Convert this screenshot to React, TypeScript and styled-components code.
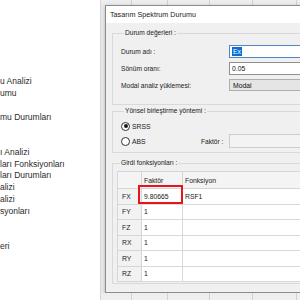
import React from 'react';
import styled, { createGlobalStyle } from 'styled-components';

const GlobalStyle = createGlobalStyle`
  html, body {
    margin: 0;
    padding: 0;
    background: #ffffff;
  }
  * {
    box-sizing: border-box;
  }
`;

const treeItems = [
  '', '', '', '', '', '', '',
  'u Analizi',
  'umu',
  '',
  'mu Durumları',
  '', '',
  'ı Analizi',
  'ları Fonksiyonları',
  'ları Durumları',
  'alizi',
  'alizi',
  'syonları',
  '', '',
  'eri',
  '', '', '',
];

const stripCells = [31, 36, 42, 43, 44, 20];

const rows = [
  { name: 'FX', factor: '9.80665', fn: 'RSF1' },
  { name: 'FY', factor: '1', fn: '' },
  { name: 'FZ', factor: '1', fn: '' },
  { name: 'RX', factor: '1', fn: '' },
  { name: 'RY', factor: '1', fn: '' },
  { name: 'RZ', factor: '1', fn: '' },
];

function App() {
  return (
    <>
      <GlobalStyle />
      <Screen>
        <Sidebar>
          <TreeList>
            {treeItems.map((t, i) => (
              <TreeItem key={i}>{t}</TreeItem>
            ))}
          </TreeList>
        </Sidebar>
        <Workspace>
          <Strip $height={5}>
            {stripCells.map((w, i) => (
              <StripCell key={i} style={{ width: w }} />
            ))}
          </Strip>
          <Dialog>
            <TitleBar>Tasarım Spektrum Durumu</TitleBar>
            <DialogBody>
              <GroupBox $pad="7px 0 12px 8px">
                <GroupTitle>Durum değerleri :</GroupTitle>
                <FormGrid>
                  <FieldLabel>Durum adı :</FieldLabel>
                  <TextBox $focused>
                    <Selected>Ex</Selected>
                  </TextBox>
                  <FieldLabel>Sönüm oranı:</FieldLabel>
                  <TextBox>0.05</TextBox>
                  <FieldLabel>Modal analiz yüklemesi:</FieldLabel>
                  <ComboBox>Modal</ComboBox>
                </FormGrid>
              </GroupBox>

              <GroupBox $pad="4px 0 4px 8px" $gap={1}>
                <GroupTitle>Yönsel birleştirme yöntemi :</GroupTitle>
                <MethodGrid>
                  <RadioRow>
                    <Radio $checked />
                    <span>SRSS</span>
                  </RadioRow>
                  <span />
                  <span />
                  <RadioRow>
                    <Radio />
                    <span>ABS</span>
                  </RadioRow>
                  <FieldLabel>Faktör :</FieldLabel>
                  <TextBox $disabled $tall />
                </MethodGrid>
              </GroupBox>

              <GroupBox $pad="3px 0 1px 4px" $gap={5}>
                <GroupTitle>Girdi fonksiyonları :</GroupTitle>
                <TableWrap>
                  <Grid>
                    <colgroup>
                      <col style={{ width: 24 }} />
                      <col style={{ width: 41 }} />
                      <col />
                    </colgroup>
                    <thead>
                      <tr>
                        <CornerCell />
                        <HeadCell>Faktör</HeadCell>
                        <HeadCell>Fonksiyon</HeadCell>
                      </tr>
                    </thead>
                    <tbody>
                      {rows.map((r) => (
                        <tr key={r.name}>
                          <RowHead>{r.name}</RowHead>
                          <Cell>{r.factor}</Cell>
                          <Cell>{r.fn}</Cell>
                        </tr>
                      ))}
                    </tbody>
                  </Grid>
                  <Highlight />
                </TableWrap>
              </GroupBox>
            </DialogBody>
          </Dialog>
          <Strip $height={7}>
            {stripCells.map((w, i) => (
              <StripCell key={i} style={{ width: w }} />
            ))}
          </Strip>
        </Workspace>
      </Screen>
    </>
  );
}

export default App;

const Screen = styled.div`
  display: flex;
  width: 300px;
  height: 300px;
  overflow: hidden;
  font-family: 'Liberation Sans', Arial, sans-serif;
  color: #111;
`;

const Sidebar = styled.div`
  width: 101px;
  flex-shrink: 0;
  background: #ffffff;
  border-right: 1px solid #d6d6d6;
  overflow: hidden;
`;

const TreeList = styled.div`
  margin-top: -6px;
  display: flex;
  flex-direction: column;
`;

const TreeItem = styled.div`
  height: 11.75px;
  line-height: 11.75px;
  font-size: 8.5px;
  color: #2a2a2a;
  white-space: nowrap;
`;

const Workspace = styled.div`
  flex: 1;
  display: flex;
  flex-direction: column;
  background: #ececec;
  min-width: 0;
`;

const Strip = styled.div<{ $height: number }>`
  display: flex;
  height: ${({ $height }) => $height}px;
  flex-shrink: 0;
  background: #eeeeee;
`;

const StripCell = styled.div`
  flex-shrink: 0;
  height: 100%;
  border-right: 1px solid #d2d2d2;
`;

const Dialog = styled.div`
  width: 280px;
  min-width: 280px;
  height: 288px;
  margin-left: 4px;
  flex-shrink: 0;
  display: flex;
  flex-direction: column;
  border: 1px solid #8c8c8c;
  background: #f0f0f0;
  box-shadow: 0 1px 4px rgba(0, 0, 0, 0.25);
`;

const TitleBar = styled.div`
  height: 17px;
  flex-shrink: 0;
  background: #ffffff;
  padding-left: 4px;
  font-size: 7.2px;
  line-height: 17px;
  color: #1a1a1a;
`;

const DialogBody = styled.div`
  flex: 1;
  display: flex;
  flex-direction: column;
  padding: 5px 0 0 6px;
`;

const GroupBox = styled.fieldset<{ $pad: string; $gap?: number }>`
  margin: ${({ $gap }) => $gap ?? 0}px 0 0 0;
  padding: ${({ $pad }) => $pad};
  border: 1px solid #d9d9d9;
  min-width: 0;
`;

const GroupTitle = styled.legend`
  padding: 0 1px;
  margin-left: 3px;
  font-size: 6.6px;
  line-height: 10px;
  color: #1a1a1a;
`;

const FormGrid = styled.div`
  display: grid;
  grid-template-columns: 108px 1fr;
  grid-auto-rows: 13px;
  row-gap: 4px;
  align-items: center;
`;

const FieldLabel = styled.span`
  font-size: 6.6px;
  color: #1a1a1a;
  white-space: nowrap;
`;

const TextBox = styled.div<{ $focused?: boolean; $disabled?: boolean; $tall?: boolean }>`
  height: ${({ $tall }) => ($tall ? 14 : 13)}px;
  display: flex;
  align-items: center;
  padding-left: 2px;
  font-size: 6.8px;
  background: ${({ $disabled }) => ($disabled ? '#f3f3f3' : '#ffffff')};
  border: 1px solid
    ${({ $focused, $disabled }) => ($focused ? '#4f86c6' : $disabled ? '#cccccc' : '#8f8f8f')};
`;

const Selected = styled.span`
  background: #0a6fd0;
  color: #ffffff;
  padding: 0 1px;
  line-height: 9px;
`;

const ComboBox = styled.div`
  height: 12px;
  align-self: start;
  display: flex;
  align-items: center;
  padding-left: 3px;
  font-size: 6.8px;
  background: #e5e5e5;
  border: 1px solid #adadad;
`;

const MethodGrid = styled.div`
  display: grid;
  grid-template-columns: 80px 28px 1fr;
  grid-template-rows: 12px 14px;
  row-gap: 2px;
  align-items: center;
`;

const RadioRow = styled.label`
  display: flex;
  align-items: center;
  gap: 2px;
  font-size: 6.8px;
  color: #1a1a1a;
`;

const Radio = styled.span<{ $checked?: boolean }>`
  width: 9px;
  height: 9px;
  border-radius: 50%;
  border: 1px solid #333333;
  background: #ffffff;
  display: flex;
  align-items: center;
  justify-content: center;

  &::after {
    content: '';
    width: 4px;
    height: 4px;
    border-radius: 50%;
    background: ${({ $checked }) => ($checked ? '#1a1a1a' : 'transparent')};
  }
`;

const TableWrap = styled.div`
  position: relative;
`;

const Grid = styled.table`
  width: 250px;
  table-layout: fixed;
  border-collapse: collapse;
  background: #ffffff;
  border: 1px solid #b9b9b9;
  font-size: 6.8px;
  color: #1a1a1a;

  td,
  th {
    padding: 0;
    white-space: nowrap;
    overflow: hidden;
  }
`;

const CornerCell = styled.th`
  height: 17px;
  background: #f4f4f4;
  border: 1px solid #d6d6d6;
`;

const HeadCell = styled.th`
  height: 17px;
  background: #f4f4f4;
  border: 1px solid #d6d6d6;
  text-align: left;
  font-weight: normal;
  padding-left: 2px !important;
`;

const RowHead = styled.td`
  height: 15.5px;
  background: #f2f2f2;
  border: 1px solid #d6d6d6;
  padding-left: 4px !important;
`;

const Cell = styled.td`
  height: 15.5px;
  border: 1px solid #d9d9d9;
  padding-left: 2px !important;
`;

const Highlight = styled.div`
  position: absolute;
  left: 21px;
  top: 14px;
  width: 45px;
  height: 19px;
  border: 2px solid #e3161c;
  pointer-events: none;
`;
